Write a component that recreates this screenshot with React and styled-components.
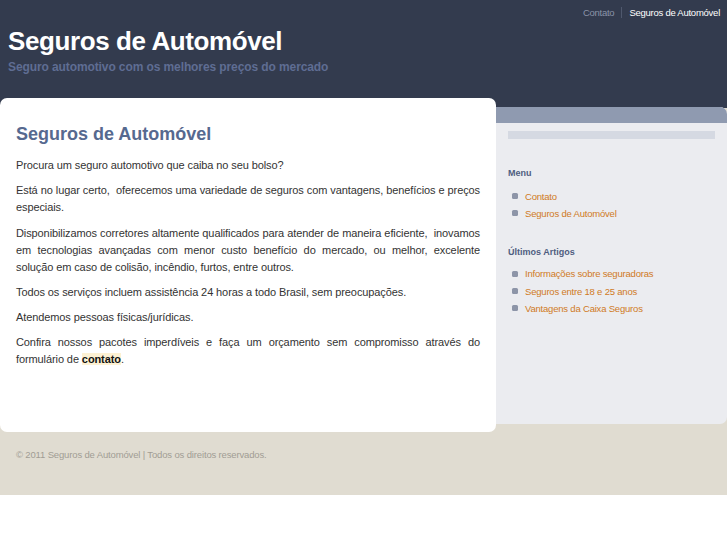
import React from "react";
import styled, { createGlobalStyle } from "styled-components";

const Global = createGlobalStyle`
  html, body { margin: 0; padding: 0; background: #ffffff; }
  body { font-family: "Liberation Sans", Arial, sans-serif; }
  * { box-sizing: border-box; }
`;

const Header = styled.header`
  background: #333b4e;
  height: 98px;
`;

const TopNav = styled.nav`
  display: flex;
  justify-content: flex-end;
  align-items: center;
  height: 24px;
  padding-top: 1px;
  font-size: 9.5px;
  letter-spacing: -0.25px;
`;

const NavLink = styled.a`
  color: ${(p) => (p.$active ? "#ffffff" : "#8a93a8")};
  text-decoration: none;
  padding: 0 7px 0 7px;
  border-left: ${(p) => (p.$first ? "none" : "1px solid #4f586d")};
  line-height: 11px;
  &:last-child { border-right: 1px solid #4f586d; padding-right: 8px; margin-right: -2px; }
`;

const SiteTitle = styled.h1`
  margin: 2px 0 0 8px;
  color: #ffffff;
  font-size: 26px;
  font-weight: bold;
  line-height: 30px;
  letter-spacing: -0.4px;
`;

const Tagline = styled.p`
  margin: 3px 0 0 8px;
  color: #5f6d93;
  font-size: 12px;
  font-weight: bold;
  line-height: 16px;
  letter-spacing: -0.1px;
`;

const Row = styled.div`
  display: flex;
  align-items: flex-start;
  background: linear-gradient(to bottom, #333b4e 0, #333b4e 10px, #e0dcd1 10px);
`;

const Main = styled.main`
  width: 496px;
  height: 334px;
  background: #ffffff;
  border-radius: 7px;
  padding: 25px 16px 0 16px;
`;

const PageTitle = styled.h2`
  margin: 0 0 12px 0;
  color: #56698f;
  font-size: 18px;
  font-weight: bold;
  line-height: 22px;
`;

const Para = styled.p`
  margin: 0 0 8.3px 0;
  color: #333333;
  font-size: 11px;
  line-height: 17px;
  letter-spacing: -0.1px;
  text-align: justify;
`;

const Highlight = styled.a`
  background: #fdf1d3;
  color: #111111;
  font-weight: bold;
  text-decoration: none;
`;

const Sidebar = styled.aside`
  flex: 1;
  margin-top: 9px;
  height: 317px;
  background: #ebecf0;
  border-radius: 0 7px 7px 0;
  overflow: hidden;
`;

const SideCap = styled.div`
  height: 16px;
  background: #8f9ab0;
`;

const SideStrip = styled.div`
  height: 8px;
  margin: 8px 12px 0 12px;
  background: #d5d9e2;
`;

const SideHeading = styled.h3`
  margin: ${(p) => p.$top}px 0 0 12px;
  color: #4f5d80;
  font-size: 9px;
  font-weight: bold;
  line-height: 12px;
`;

const SideList = styled.ul`
  list-style: none;
  margin: ${(p) => p.$gap}px 0 0 0;
  padding: 0 0 0 16px;
`;

const SideItem = styled.li`
  display: flex;
  align-items: center;
  height: 17.3px;
  font-size: 9.5px;
  letter-spacing: -0.2px;
  &::before {
    content: "";
    width: 6px;
    height: 6px;
    border-radius: 1.5px;
    background: #8d95a8;
    margin-right: 7px;
  }
`;

const SideLink = styled.a`
  color: #d07a1e;
  text-decoration: none;
`;

const Footer = styled.footer`
  background: #e0dcd1;
  height: 63px;
  padding: 17px 16px 0 16px;
  color: #a19d94;
  font-size: 9.5px;
  letter-spacing: -0.15px;
`;

export default function App() {
  return (
    <>
      <Global />
      <Header>
        <TopNav>
          <NavLink $first href="#">Contato</NavLink>
          <NavLink $active href="#">Seguros de Automóvel</NavLink>
        </TopNav>
        <SiteTitle>Seguros de Automóvel</SiteTitle>
        <Tagline>Seguro automotivo com os melhores preços do mercado</Tagline>
      </Header>
      <Row>
        <Main>
          <PageTitle>Seguros de Automóvel</PageTitle>
          <Para>Procura um seguro automotivo que caiba no seu bolso?</Para>
          <Para>Está no lugar certo,&nbsp; oferecemos uma variedade de seguros com vantagens, benefícios e preços especiais.</Para>
          <Para>Disponibilizamos corretores altamente qualificados para atender de maneira eficiente,&nbsp; inovamos em tecnologias avançadas com menor custo benefício do mercado, ou melhor, excelente solução em caso de colisão, incêndio, furtos, entre outros.</Para>
          <Para>Todos os serviços incluem assistência 24 horas a todo Brasil, sem preocupações.</Para>
          <Para>Atendemos pessoas físicas/jurídicas.</Para>
          <Para>Confira nossos pacotes imperdíveis e faça um orçamento sem compromisso através do formulário de <Highlight href="#">contato</Highlight>.</Para>
        </Main>
        <Sidebar>
          <SideCap />
          <SideStrip />
          <SideHeading $top={28}>Menu</SideHeading>
          <SideList $gap={8.5}>
            <SideItem><SideLink href="#">Contato</SideLink></SideItem>
            <SideItem><SideLink href="#">Seguros de Automóvel</SideLink></SideItem>
          </SideList>
          <SideHeading $top={24}>Últimos Artigos</SideHeading>
          <SideList $gap={7}>
            <SideItem><SideLink href="#">Informações sobre seguradoras</SideLink></SideItem>
            <SideItem><SideLink href="#">Seguros entre 18 e 25 anos</SideLink></SideItem>
            <SideItem><SideLink href="#">Vantagens da Caixa Seguros</SideLink></SideItem>
          </SideList>
        </Sidebar>
      </Row>
      <Footer>© 2011 Seguros de Automóvel | Todos os direitos reservados.</Footer>
    </>
  );
}
